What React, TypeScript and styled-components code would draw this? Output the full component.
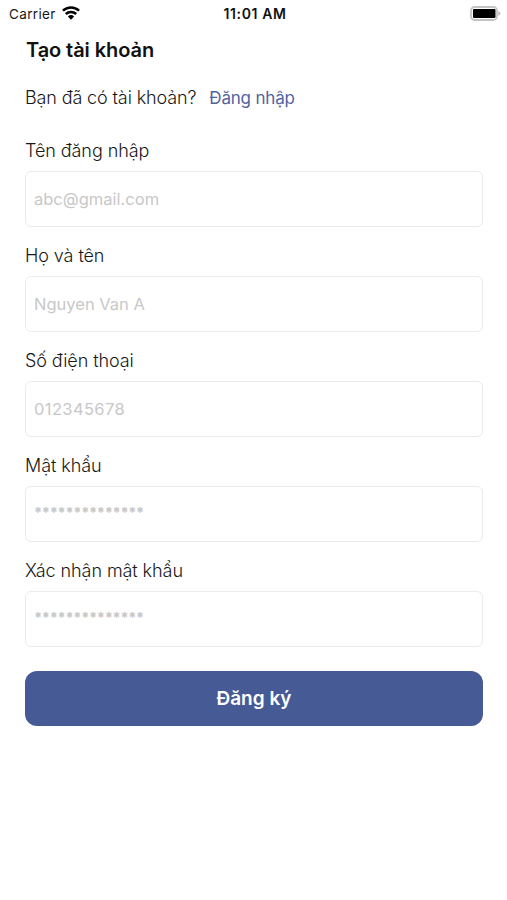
import React from 'react';
import styled, { createGlobalStyle } from 'styled-components';

const GlobalStyle = createGlobalStyle`
  * { box-sizing: border-box; }
  body { margin: 0; background: #fff; font-family: Inter, "Liberation Sans", sans-serif; color: #181818; }
`;

const Screen = styled.main`
  width: 507px;
  height: 900px;
  background: #fff;
  overflow: hidden;
`;

const StatusBar = styled.header`
  height: 28px;
  padding: 0 6px 0 9px;
  display: grid;
  grid-template-columns: 1fr auto 1fr;
  align-items: center;
  font-size: 13.5px;
  line-height: 28px;
`;

const Carrier = styled.div`
  display: flex;
  align-items: center;
  gap: 6px;
  letter-spacing: 0.35px;

  svg { margin-top: -2px; }
`;

const Clock = styled.time`
  font-weight: 600;
  font-size: 14px;
  letter-spacing: 0.6px;
  color: #111;
`;

const BatterySlot = styled.div`
  display: flex;
  justify-content: flex-end;
  margin-top: -1px;
`;

const Content = styled.div`
  padding: 8px 24px 0 25px;
`;

const Title = styled.h1`
  margin: 0 0 0 1px;
  font-size: 20px;
  font-weight: 600;
  line-height: 28px;
  letter-spacing: -0.08px;
  color: #111;
  white-space: nowrap;
`;

const LoginRow = styled.p`
  margin: 20px 0 0;
  display: flex;
  gap: 13px;
  font-size: 18px;
  font-weight: 300;
  line-height: 28px;
  letter-spacing: -0.13px;
  white-space: nowrap;
`;

const LoginLink = styled.a`
  color: #4f64a0;
  font-size: 17px;
  font-weight: 400;
  letter-spacing: -0.18px;
`;

const Form = styled.form`
  margin-top: 25px;
`;

const Field = styled.div`
  height: 105px;
`;

const Label = styled.label`
  display: block;
  font-size: 18px;
  font-weight: 300;
  line-height: 28px;
  letter-spacing: -0.08px;
  white-space: nowrap;
`;

type Kind = 'text' | 'digits' | 'masked';

const placeholderFont = {
  text: '400 16.5px',
  digits: '400 16.5px',
  masked: '800 14px',
};

const placeholderTracking = {
  text: '0',
  digits: '0.38px',
  masked: '-0.3px',
};

const Input = styled.input<{ $kind: Kind }>`
  display: block;
  width: 100%;
  height: 56px;
  margin-top: 6px;
  padding: ${(p) => (p.$kind === 'masked' ? '0 8px 3px' : '0 8px 1px')};
  border: 1px solid #ebebeb;
  border-radius: 6px;
  font: ${(p) => placeholderFont[p.$kind]} Inter, sans-serif;
  letter-spacing: ${(p) => placeholderTracking[p.$kind]};
  outline: none;
  &::placeholder { color: #c8c8c8; opacity: 1; }
`;

const Submit = styled.button`
  display: block;
  width: 100%;
  height: 55px;
  margin-top: 9px;
  padding: 0;
  border: 0;
  border-radius: 12px;
  background: #465b95;
  color: #fff;
  font: 600 19px Inter, sans-serif;
`;

const fields: { label: string; hint: string; kind: Kind }[] = [
  { label: 'Tên đăng nhập', hint: 'abc@gmail.com', kind: 'text' },
  { label: 'Họ và tên', hint: 'Nguyen Van A', kind: 'text' },
  { label: 'Số điện thoại', hint: '012345678', kind: 'digits' },
  { label: 'Mật khẩu', hint: '**************', kind: 'masked' },
  { label: 'Xác nhận mật khẩu', hint: '**************', kind: 'masked' },
];

export default function App() {
  return (
    <Screen>
      <GlobalStyle />
      <StatusBar>
        <Carrier>Carrier
          <svg width="18" height="14" viewBox="0 0 18 14" fill="none" stroke="#000" strokeWidth="2.5">
            <path d="M.9 4.7a11.8 11.8 0 0 1 16.2 0M3.8 8a7.6 7.6 0 0 1 10.4 0" />
            <path d="M9 13.7 5.9 10.4a4.5 4.5 0 0 1 6.2 0Z" fill="#000" stroke="none" />
          </svg>
        </Carrier>
        <Clock>11:01 AM</Clock>
        <BatterySlot>
          <svg width="31" height="15" viewBox="0 0 31 15">
            <rect x="1" y="1" width="26" height="13" rx="3.5" fill="#fff" stroke="#c4c4c4" strokeWidth="1.8" />
            <rect x="3" y="3" width="22.5" height="9" rx="1" />
            <path d="M28.3 5.2v4.6q2.1-.6 2.1-2.3t-2.1-2.3Z" fill="#bbb" />
          </svg>
        </BatterySlot>
      </StatusBar>
      <Content>
        <Title>Tạo tài khoản</Title>
        <LoginRow><span>Bạn đã có tài khoản?</span><LoginLink>Đăng nhập</LoginLink></LoginRow>
        <Form>
          {fields.map(({ label, hint, kind }, i) => (
            <Field key={label}>
              <Label htmlFor={`field-${i}`}>{label}</Label>
              <Input id={`field-${i}`} placeholder={hint} $kind={kind} />
            </Field>
          ))}
          <Submit type="button">Đăng ký</Submit>
        </Form>
      </Content>
    </Screen>
  );
}
